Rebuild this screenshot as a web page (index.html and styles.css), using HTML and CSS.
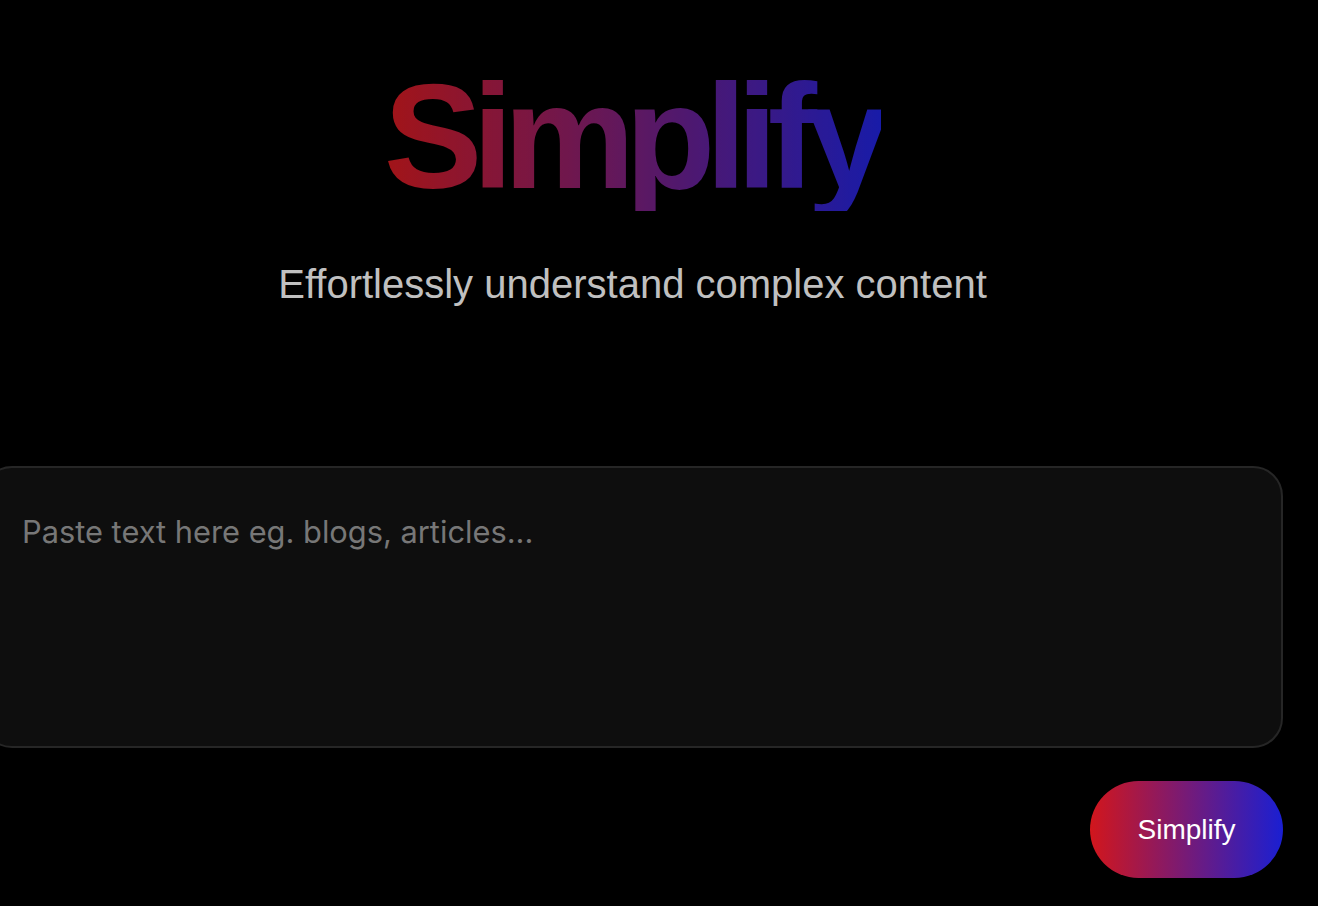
FILE: index.html
```html
<!DOCTYPE html>
<html lang="en">
<head>
<meta charset="utf-8">
<title>Simplify</title>
<link rel="stylesheet" href="styles.css">
</head>
<body>
<main class="page">
  <header class="hero">
    <h1 class="logo">Simplify</h1>
    <p class="tagline">Effortlessly understand complex content</p>
  </header>
  <section class="composer">
    <textarea class="input" placeholder="Paste text here eg. blogs, articles..."></textarea>
    <div class="actions">
      <button class="btn" type="button">Simplify</button>
    </div>
  </section>
</main>
</body>
</html>
```

FILE: styles.css
```css
html, body {
  margin: 0;
  padding: 0;
  background: #000;
}
body {
  font-family: "Liberation Sans", Arial, Helvetica, sans-serif;
  overflow: hidden;
}
.page {
  width: 1301px;
  margin-left: -18px;
  display: flex;
  flex-direction: column;
}
.hero {
  display: flex;
  flex-direction: column;
  align-items: center;
}
.logo {
  margin: 63px 0 0;
  font-size: 148px;
  line-height: 1;
  font-weight: 700;
  letter-spacing: -10px;
  padding-right: 2px;
  background: linear-gradient(90deg, #cc1a1e 0%, #1f22d2 100%);
  -webkit-background-clip: text;
  background-clip: text;
  color: transparent;
  opacity: 0.8;
}
.tagline {
  margin: 53px 0 0;
  font-size: 40px;
  line-height: 1;
  color: #c0c0c0;
}
.composer {
  margin-top: 162px;
  display: flex;
  flex-direction: column;
}
.input {
  box-sizing: border-box;
  width: 100%;
  height: 282px;
  margin: 0;
  padding: 46px 40px 42px 38px;
  background: #0e0e0e;
  border: 2px solid #262626;
  border-radius: 30px;
  color: #ddd;
  font-family: Inter, "Noto Sans", sans-serif;
  font-size: 30.8px;
  line-height: 1.2;
  resize: none;
  outline: none;
  display: block;
}
.input::placeholder {
  color: #777;
}
.actions {
  display: flex;
  justify-content: flex-end;
  margin-top: 33px;
}
.btn {
  width: 193px;
  height: 97px;
  border: 0;
  border-radius: 49px;
  background: linear-gradient(90deg, #d2161c 0%, #1a1fd2 100%);
  color: #fff;
  font-family: "Liberation Sans", Arial, Helvetica, sans-serif;
  font-size: 28px;
  cursor: pointer;
  padding: 0;
}
```
